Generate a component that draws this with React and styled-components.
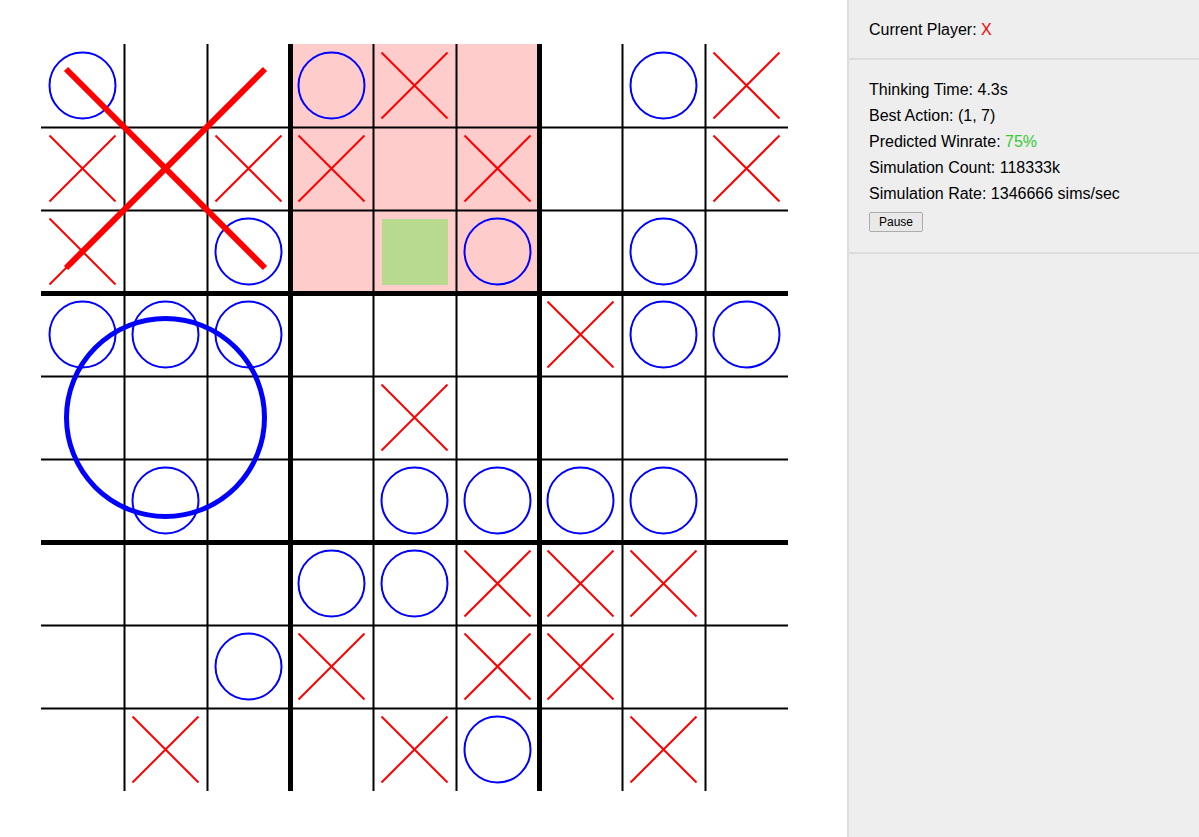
import styled, { createGlobalStyle } from "styled-components";

const GlobalStyle = createGlobalStyle`
    html, body {
        margin: 0;
        padding: 0;
        background: #fff;
        font-family: "Liberation Sans", Arial, sans-serif;
    }
`

const Page = styled.div`
    display: flex;
    height: 100vh;
    overflow: hidden;
`

const BoardArea = styled.main`
    flex: 1;
    padding: 44px 0 0 41px;
`

const Sidebar = styled.aside`
    width: 350px;
    background-color: #eee;
    border-left: 2px solid #ddd;
    color: #000;
    font-size: 16px;
`

const Section = styled.section`
    padding: ${(p) => p.$pad};
    border-bottom: 2px solid #ddd;
`

const Row = styled.div`
    height: 26px;
    line-height: 26px;
`

const Value = styled.span`
    color: ${(p) => p.$color};
`

const PauseButton = styled.button`
    margin-top: 5px;
    width: 54px;
    height: 20px;
    padding: 0;
    font-family: "Liberation Sans", Arial, sans-serif;
    font-size: 12px;
    color: #000;
    background-color: #e9e9e9;
    border: 1px solid #adadad;
    border-radius: 2px;
`

const CELL = 83;
const SIZE = CELL * 9;

const BOARD = [
    "O..OX..OX",
    "X.XX.X..X",
    "X.O.GO.O.",
    "OOO...XOO",
    "....X....",
    ".O..OOOO.",
    "...OOXXX.",
    "..OX.XX..",
    ".X..XO.X.",
];

function Mark({ kind, r, c }) {
    const x = c * CELL;
    const y = r * CELL;
    if (kind === "O") {
        return <circle cx={x + 41.5} cy={y + 41.5} r={33} fill="none" stroke="#0000ff" strokeWidth={2} />;
    }
    if (kind === "X") {
        return (
            <g stroke="#ff0000" strokeWidth={2}>
                <line x1={x + 8.5} y1={y + 8.5} x2={x + 74.5} y2={y + 74.5} />
                <line x1={x + 74.5} y1={y + 8.5} x2={x + 8.5} y2={y + 74.5} />
            </g>
        );
    }
    if (kind === "G") {
        return <rect x={x + 9} y={y + 9} width={66} height={66} fill="#b7da8f" />;
    }
    return null;
}

function Board() {
    const lines = [];
    for (let i = 1; i < 9; i++) {
        const thick = i % 3 === 0;
        const w = thick ? 5 : 2;
        const p = i * CELL;
        lines.push(<line key={"v" + i} x1={p + 0.5} y1={0} x2={p + 0.5} y2={SIZE} stroke="#000" strokeWidth={w} />);
        lines.push(<line key={"h" + i} x1={0} y1={p + 0.5} x2={SIZE} y2={p + 0.5} stroke="#000" strokeWidth={w} />);
    }
    return (
        <svg width={SIZE} height={SIZE} viewBox={`0 0 ${SIZE} ${SIZE}`} style={{ display: "block", overflow: "visible" }}>
            <rect x={CELL * 3} y={0} width={CELL * 3} height={CELL * 3} fill="#ffcccc" />
            {BOARD.map((row, r) =>
                row.split("").map((k, c) => k === "G" ? <Mark key={r + "-" + c} kind={k} r={r} c={c} /> : null)
            )}
            {lines}
            {BOARD.map((row, r) =>
                row.split("").map((k, c) => k !== "G" ? <Mark key={r + "_" + c} kind={k} r={r} c={c} /> : null)
            )}
            <g stroke="#ff0000" strokeWidth={6}>
                <line x1={25} y1={25} x2={224} y2={224} />
                <line x1={224} y1={25} x2={25} y2={224} />
            </g>
            <circle cx={124.5} cy={373.5} r={99} fill="none" stroke="#0000ff" strokeWidth={5} />
        </svg>
    );
}

export default function App() {
    return (
        <Page>
            <GlobalStyle />
            <BoardArea>
                <Board />
            </BoardArea>
            <Sidebar>
                <Section $pad="21px 20px 19px">
                    <div>Current Player: <Value $color="#ff0000">X</Value></div>
                </Section>
                <Section $pad="17px 20px 20px">
                    <Row>Thinking Time: 4.3s</Row>
                    <Row>Best Action: (1, 7)</Row>
                    <Row>Predicted Winrate: <Value $color="#3c3">75%</Value></Row>
                    <Row>Simulation Count: 118333k</Row>
                    <Row>Simulation Rate: 1346666 sims/sec</Row>
                    <PauseButton>Pause</PauseButton>
                </Section>
            </Sidebar>
        </Page>
    );
}
